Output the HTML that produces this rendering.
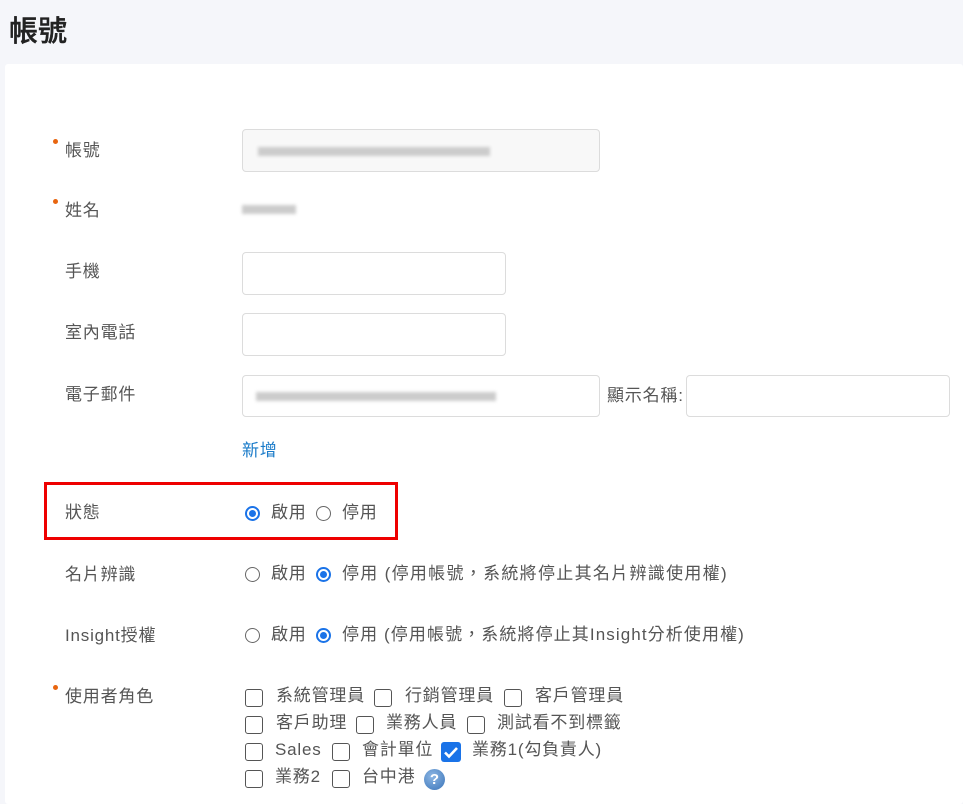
<!DOCTYPE html>
<html><head><meta charset="utf-8"><style>
body{margin:0;width:963px;height:797px;background:#f5f6fa;font-family:"Liberation Sans","Noto Sans CJK TC",sans-serif;position:relative;overflow:hidden;color:#444}
.a{position:absolute;white-space:nowrap}
.card{position:absolute;left:5px;top:64px;width:958px;height:740px;background:#fff;border-radius:3px}
.lb{position:absolute;left:65px;font-size:17px;color:#555;line-height:20px;letter-spacing:0.8px}
.dot{position:absolute;width:5px;height:5px;border-radius:50%;background:#e8650f}
.in{position:absolute;border:1px solid #dcdcdc;border-radius:4px;background:#fff;box-sizing:border-box}
.blur{position:absolute;height:9px;background:#ccc;filter:blur(1.5px)}
.t{position:absolute;font-size:17px;color:#555;line-height:20px;white-space:nowrap;letter-spacing:0.8px}
.r{position:absolute;width:15px;height:15px;border:1px solid #666;border-radius:50%;box-sizing:border-box}
.r.on{border:2px solid #1a73e8}
.r.on:after{content:"";position:absolute;left:2px;top:2px;width:7px;height:7px;border-radius:50%;background:#1a73e8}
.c{position:absolute;width:18px;height:18px;border:1.5px solid #555;border-radius:3px;box-sizing:border-box}
</style></head><body>
<div class="a" style="left:9px;top:8px;font-size:29px;color:#222;font-weight:500;-webkit-text-stroke:0.4px #222">帳號</div>
<div class="card"></div>

<div class="dot" style="left:53px;top:139px"></div><div class="lb" style="top:141px">帳號</div>
<div class="in" style="left:242px;top:129px;width:358px;height:43px;background:#f8f8f8"></div>
<div class="blur" style="left:258px;top:147px;width:232px"></div>

<div class="dot" style="left:53px;top:199px"></div><div class="lb" style="top:201px">姓名</div>
<div class="blur" style="left:242px;top:205px;width:54px"></div>

<div class="lb" style="top:262px">手機</div>
<div class="in" style="left:242px;top:252px;width:264px;height:43px"></div>
<div class="lb" style="top:323px">室內電話</div>
<div class="in" style="left:242px;top:313px;width:264px;height:43px"></div>
<div class="lb" style="top:385px">電子郵件</div>
<div class="in" style="left:242px;top:375px;width:358px;height:42px"></div>
<div class="blur" style="left:256px;top:392px;width:240px"></div>
<div class="t" style="left:607px;top:386px">顯示名稱:</div>
<div class="in" style="left:686px;top:375px;width:264px;height:42px"></div>
<div class="t" style="left:242px;top:441px;color:#1a7bc9">新增</div>

<div class="a" style="left:44px;top:482px;width:354px;height:58px;border:3px solid #e00;box-sizing:border-box"></div>
<div class="lb" style="top:503px">狀態</div>
<div class="r on" style="left:245px;top:506px"></div><div class="t" style="left:271px;top:503px">啟用</div>
<div class="r" style="left:316px;top:506px"></div><div class="t" style="left:342px;top:503px">停用</div>

<div class="lb" style="top:565px">名片辨識</div>
<div class="r" style="left:245px;top:567px"></div><div class="t" style="left:271px;top:564px">啟用</div>
<div class="r on" style="left:316px;top:567px"></div><div class="t" style="left:342px;top:564px;letter-spacing:1.3px">停用 (停用帳號，系統將停止其名片辨識使用權)</div>

<div class="lb" style="top:626px">Insight授權</div>
<div class="r" style="left:245px;top:628px"></div><div class="t" style="left:271px;top:625px">啟用</div>
<div class="r on" style="left:316px;top:628px"></div><div class="t" style="left:342px;top:625px;letter-spacing:1.1px">停用 (停用帳號，系統將停止其Insight分析使用權)</div>

<div class="dot" style="left:53px;top:685px"></div><div class="lb" style="top:687px">使用者角色</div>
<div class="c" style="left:245px;top:689px"></div><div class="t" style="left:276px;top:686px">系統管理員</div>
<div class="c" style="left:374px;top:689px"></div><div class="t" style="left:405px;top:686px">行銷管理員</div>
<div class="c" style="left:504px;top:689px"></div><div class="t" style="left:535px;top:686px">客戶管理員</div>

<div class="c" style="left:245px;top:716px"></div><div class="t" style="left:276px;top:713px">客戶助理</div>
<div class="c" style="left:356px;top:716px"></div><div class="t" style="left:386px;top:713px">業務人員</div>
<div class="c" style="left:467px;top:716px"></div><div class="t" style="left:497px;top:713px">測試看不到標籤</div>

<div class="c" style="left:245px;top:743px"></div><div class="t" style="left:275px;top:740px">Sales</div>
<div class="c" style="left:332px;top:743px"></div><div class="t" style="left:362px;top:740px">會計單位</div>
<div class="a" style="left:441px;top:742px;width:20px;height:20px;background:#1a73e8;border-radius:3px"><svg width="20" height="20"><path d="M4 10.5l4 4 8-8.5" stroke="#fff" stroke-width="2.6" fill="none"/></svg></div>
<div class="t" style="left:472px;top:740px">業務1(勾負責人)</div>

<div class="c" style="left:245px;top:770px"></div><div class="t" style="left:275px;top:767px">業務2</div>
<div class="c" style="left:332px;top:770px"></div><div class="t" style="left:362px;top:767px">台中港</div>
<div class="a" style="left:424px;top:769px;width:21px;height:21px;border-radius:50%;background:radial-gradient(circle at 40% 35%,#8cb6e4,#3a74b8);color:#fff;font-weight:bold;font-size:15px;text-align:center;line-height:21px">?</div>
</body></html>
